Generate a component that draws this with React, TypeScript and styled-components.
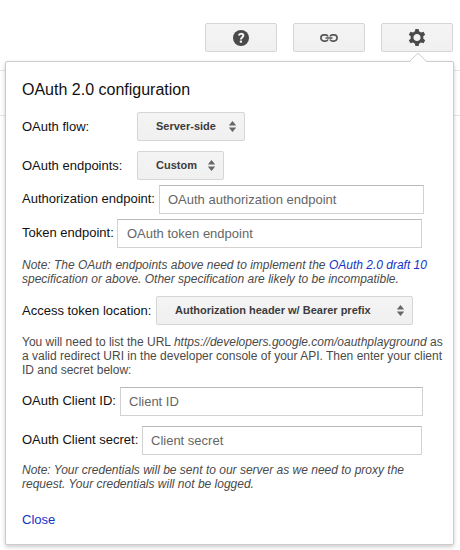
import React from "react";
import styled, { createGlobalStyle } from "styled-components";

const GlobalStyle = createGlobalStyle`
  * { box-sizing: border-box; }
  body { margin: 0; background: #fff; font-family: "Liberation Sans", Arial, sans-serif; }
`;

const Page = styled.div`
  position: relative;
  width: 460px;
  height: 550px;
  overflow: hidden;
  padding-top: 23px;
`;

const Toolbar = styled.div`
  display: flex;
  gap: 16px;
  padding-left: 205px;
`;

const ToolButton = styled.button`
  display: flex;
  align-items: center;
  justify-content: center;
  flex: none;
  width: 72px;
  height: 29px;
  padding: 0;
  border: 1px solid #d6d6d6;
  border-radius: 2px;
  background: linear-gradient(#f4f4f4, #f0f0f0);
`;

const HeaderBand = styled.div`
  height: 46px;
  margin-top: 18px;
  border-top: 1px solid #e5e5e5;
  border-bottom: 1px solid #e5e5e5;
`;

const Popup = styled.section`
  position: absolute;
  left: 5px;
  top: 61px;
  width: 449px;
  height: 484px;
  padding: 19px 10px 0 16px;
  border: 1px solid #ccc;
  border-radius: 2px;
  background: #fff;
  box-shadow: 0 2px 4px rgba(0, 0, 0, 0.2);
`;

const Arrow = styled.svg`
  position: absolute;
  left: 403px;
  top: -10px;
`;

const Title = styled.h1`
  margin: 0 0 13px;
  height: 18px;
  line-height: 18px;
  font-size: 16px;
  font-weight: 400;
  color: #111;
  white-space: nowrap;
`;

const Row = styled.div<{ $gap: number }>`
  display: flex;
  align-items: center;
  height: 29px;
  margin-bottom: ${(p) => p.$gap}px;
`;

const Label = styled.label<{ $width: number; $raised?: boolean }>`
  flex: none;
  width: ${(p) => p.$width}px;
  padding-bottom: ${(p) => (p.$raised ? 2 : 0)}px;
  font-size: 13px;
  line-height: 15px;
  color: #111;
  white-space: nowrap;
`;

const Select = styled.button<{ $width: number }>`
  display: flex;
  align-items: center;
  justify-content: space-between;
  width: ${(p) => p.$width}px;
  height: 29px;
  padding: 0 8px 0 18px;
  border: 1px solid #d6d6d6;
  border-radius: 2px;
  background: linear-gradient(#f4f4f4, #f0f0f0);
  font: bold 11px/13px "Liberation Sans", Arial, sans-serif;
  color: #3c3c3c;
  white-space: nowrap;
`;

const Field = styled.input<{ $width: number; $indent?: number }>`
  width: ${(p) => p.$width}px;
  height: 29px;
  padding: 0 8px 1px ${(p) => p.$indent ?? 8}px;
  border: 1px solid #d2d2d2;
  border-top-color: #b9b9b9;
  font: 13px "Liberation Sans", Arial, sans-serif;
  &::placeholder { color: #666; opacity: 1; }
`;

const Copy = styled.p<{ $note?: boolean; $gap: number }>`
  margin: 0 0 ${(p) => p.$gap}px;
  font-size: 12px;
  line-height: 14px;
  font-style: ${(p) => (p.$note ? "italic" : "normal")};
  color: #4a4a4a;
`;

const Line = styled.span`
  display: block;
  height: 14px;
  white-space: nowrap;
`;

const Link = styled.a`
  color: #1133c4;
  text-decoration: none;
`;

const CloseLink = styled(Link)`
  display: block;
  font-size: 13px;
  line-height: 15px;
`;

const UpDown = () => (
  <svg width="7" height="11" viewBox="0 0 7 11" fill="#666">
    <path d="M3.5 0 7.2 4.4H-0.2zM3.5 11 7.2 6.6H-0.2z" />
  </svg>
);

const HelpIcon = () => (
  <svg width="16" height="16" viewBox="0 0 16 16">
    <circle cx="8" cy="8" r="8" fill="#4a4a4a" />
    <path d="M5.8 5.5C6.1 4.2 7.1 3.8 8.2 3.8c1.4 0 2.1.7 2.1 1.7C10.3 7.2 8.1 7.2 7.9 9.5" fill="none" stroke="#f4f4f4" strokeWidth="2.1" />
    <rect x="6.8" y="10.6" width="2.2" height="2.1" fill="#f4f4f4" />
  </svg>
);

const ChainIcon = () => (
  <svg width="18" height="8" viewBox="0 0 18 8" fill="none" stroke="#555" strokeWidth="1.7">
    <path d="M8 2.5C7.5 1.4 6.7.9 5.5.9H4a3.1 3.1 0 0 0 0 6.2h1.5C6.7 7.1 7.5 6.6 8 5.5M10 2.5C10.5 1.4 11.3.9 12.5.9H14a3.1 3.1 0 0 1 0 6.2h-1.5C11.3 7.1 10.5 6.6 10 5.5M5.5 4h7" />
  </svg>
);

const GearIcon = () => (
  <svg width="18" height="18" viewBox="-9 -8.5 18 18" fill="#4a4a4a">
    <circle r="5" fill="none" stroke="#4a4a4a" strokeWidth="2.8" />
    {[0, 60, 120, 180, 240, 300].map((a) => (
      <path key={a} d="M-2.3 -5.3 -1.6 -8.5H1.6L2.3 -5.3z" transform={`rotate(${a})`} />
    ))}
  </svg>
);

export default function App() {
  return (
    <>
      <GlobalStyle />
      <Page>
        <Toolbar>
          <ToolButton aria-label="Help"><HelpIcon /></ToolButton>
          <ToolButton aria-label="Link"><ChainIcon /></ToolButton>
          <ToolButton aria-label="Settings"><GearIcon /></ToolButton>
        </Toolbar>
        <HeaderBand />
        <Popup>
          <Arrow width="18" height="10" viewBox="0 0 18 10">
            <path d="M0.5 10 9 1.2 17.5 10z" fill="#fff" />
            <path d="M0.5 9.5 9 1.2 17.5 9.5" fill="none" stroke="#ccc" />
          </Arrow>
          <Title>OAuth 2.0 configuration</Title>
          <Row $gap={10}>
            <Label $width={115}>OAuth flow:</Label>
            <Select $width={108}>Server-side<UpDown /></Select>
          </Row>
          <Row $gap={5}>
            <Label $width={115}>OAuth endpoints:</Label>
            <Select $width={87}>Custom<UpDown /></Select>
          </Row>
          <Row $gap={5}>
            <Label $width={137} $raised>Authorization endpoint:</Label>
            <Field $width={265} placeholder="OAuth authorization endpoint" />
          </Row>
          <Row $gap={10}>
            <Label $width={95} $raised>Token endpoint:</Label>
            <Field $width={305} $indent={9} placeholder="OAuth token endpoint" />
          </Row>
          <Copy $note $gap={10}>
            <Line>Note: The OAuth endpoints above need to implement the <Link>OAuth 2.0 draft 10</Link></Line>
            <Line>specification or above. Other specification are likely to be incompatible.</Line>
          </Copy>
          <Row $gap={10}>
            <Label $width={134}>Access token location:</Label>
            <Select $width={257}>Authorization header w/ Bearer prefix<UpDown /></Select>
          </Row>
          <Copy $gap={10}>
            <Line>You will need to list the URL <em>https://developers.google.com/oauthplayground</em> as</Line>
            <Line>a valid redirect URI in the developer console of your API. Then enter your client</Line>
            <Line>ID and secret below:</Line>
          </Copy>
          <Row $gap={10}>
            <Label $width={98} $raised>OAuth Client ID:</Label>
            <Field $width={303} placeholder="Client ID" />
          </Row>
          <Row $gap={8}>
            <Label $width={120} $raised>OAuth Client secret:</Label>
            <Field $width={280} placeholder="Client secret" />
          </Row>
          <Copy $note $gap={21}>
            <Line>Note: Your credentials will be sent to our server as we need to proxy the</Line>
            <Line>request. Your credentials will not be logged.</Line>
          </Copy>
          <CloseLink>Close</CloseLink>
        </Popup>
      </Page>
    </>
  );
}
